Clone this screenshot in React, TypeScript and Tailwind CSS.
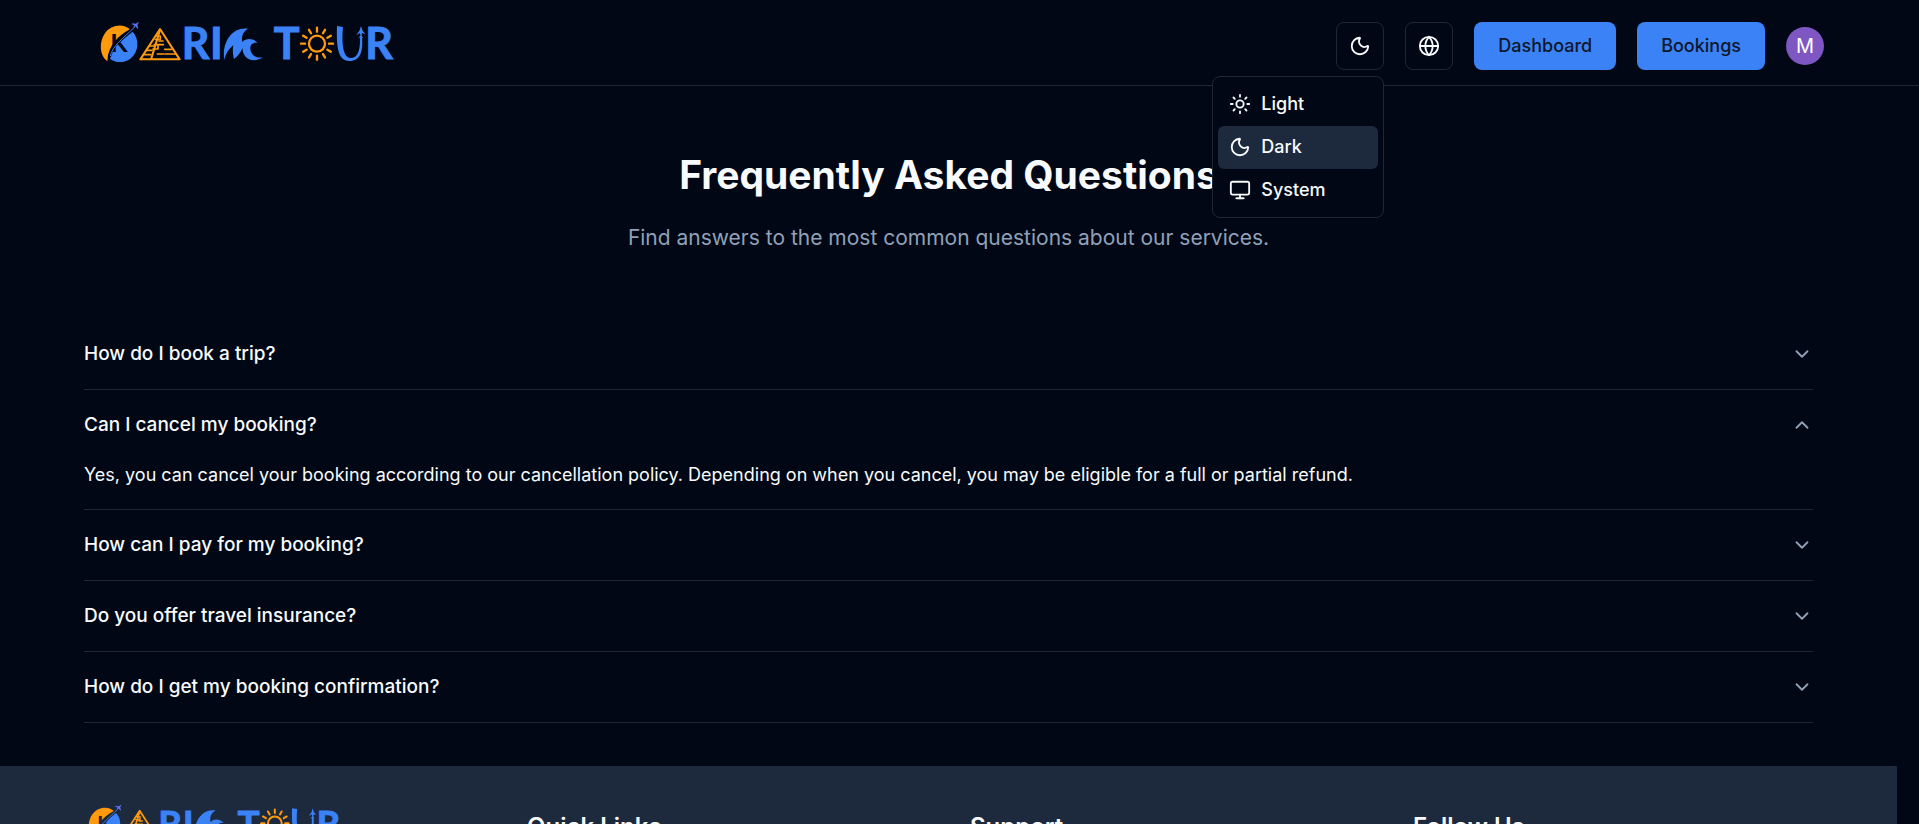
import { useState } from "react";
import { ChevronDown, Globe, Monitor, Moon, Sun } from "lucide-react";
import clsx from "clsx";

const faqs = [
  {
    question: "How do I book a trip?",
    answer: "Choose a tour, pick your dates and confirm the booking from the tour page.",
  },
  {
    question: "Can I cancel my booking?",
    answer:
      "Yes, you can cancel your booking according to our cancellation policy. Depending on when you cancel, you may be eligible for a full or partial refund.",
  },
  {
    question: "How can I pay for my booking?",
    answer: "You can pay by credit card, debit card or bank transfer.",
  },
  {
    question: "Do you offer travel insurance?",
    answer: "Yes, insurance can be added to any trip at checkout.",
  },
  {
    question: "How do I get my booking confirmation?",
    answer: "We send the confirmation to your email as soon as payment is complete.",
  },
];

const themes = [
  { name: "Light", Icon: Sun },
  { name: "Dark", Icon: Moon },
  { name: "System", Icon: Monitor },
];

const rays = [0, 30, 60, 90, 120, 150, 180, 210, 240, 270, 300, 330];

// The K and the swoosh behind the plane take the colour of the surface the logo sits on.
function Logo({ className, surface }: { className: string; surface: string }) {
  return (
    <svg viewBox="60 30 885 132" role="img" aria-label="Karim Tour" className={clsx("overflow-visible", className)}>
      <path d="M82 154C58 136 57 96 74 71C92 43 130 39 150 58C114 77 84 108 82 154Z" fill="#ff9a0c" />
      <path d="M158 65C179 88 177 126 151 146C132 160 106 159 90 146C91 114 124 91 158 65Z" fill="#3b82f6" />
      <text x="91" y="127" fontSize="76" fill={surface} className="font-[Lato] font-bold">K</text>
      <path d="M88 142C94 108 126 84 166 50" fill="none" stroke={surface} strokeWidth="9" />
      <path d="M91 138C96 110 128 86 164 51" fill="none" stroke="#3b82f6" strokeWidth="3" />
      <path d="M177 35L172 46L175 55L172 56L167 49L162 53L160 52L163 46L155 43L157 40L167 41Z" fill="#5b72f0" />
      <g fill="none" stroke="#ff9a0c" strokeWidth="6" strokeLinejoin="round" strokeLinecap="round">
        <path d="M240 57L181 148H299Z" />
        <path d="M240 60L214 145" />
        <path d="M229 78H241M226 88H237M241 88V78M223 104H250M237 93H249M219 117H234M234 117V106M254 118H275M232 132H252M256 132H286M208 108H220M199 121H216M191 134H212" strokeWidth="5" />
      </g>
      <g fill="#3b82f6" stroke="#3b82f6" strokeWidth="3" className="font-[Lato] font-bold" fontSize="129">
        <text x="305" y="148">R</text>
        <text x="390" y="148">I</text>
        <text x="581" y="148">T</text>
        <text x="856" y="148">R</text>
      </g>
      <path
        d="M433 150C424 98 457 48 504 56C489 65 483 78 487 96C500 82 522 86 533 99C514 96 507 110 513 125C519 139 532 145 549 142C533 153 508 155 495 138C489 130 487 122 488 113C481 129 472 139 462 147C459 134 457 122 460 106C445 118 437 132 433 150Z"
        fill="#3b82f6"
      />
      <g stroke="#ff9a0c" fill="none" strokeLinecap="round">
        <circle cx="711" cy="101" r="24" strokeWidth="7" />
        {rays.map((angle) => (
          <path key={angle} d="M711 65V53" strokeWidth="7" transform={`rotate(${angle} 711 101)`} />
        ))}
      </g>
      <path d="M771 48L789 51C785 92 787 143 812 144C837 144 841 112 840 80H846C850 122 842 153 808 153C773 153 769 108 771 48Z" fill="#3b82f6" />
      <path d="M843 48L847 61L856 73L846 69L845 77L850 84L843 82L835 84L841 77L840 69L829 76L839 61Z" fill="#3b82f6" />
    </svg>
  );
}

export default function App() {
  const [open, setOpen] = useState(1);
  const [theme, setTheme] = useState("Dark");

  return (
    <div className="flex h-screen flex-col overflow-hidden bg-[#010714] font-[Inter,sans-serif] text-slate-50">
      <header className="relative z-10 shrink-0 border-b border-[#1f2733]">
        <div className="mx-auto flex h-[85px] max-w-[1729px] items-center justify-between pl-[5px]">
          <a href="#home" className="pb-[2px]">
            <Logo className="w-[295px]" surface="#010714" />
          </a>
          <nav className="flex items-center gap-[21px] pt-[6px]">
            <div className="relative">
              <button
                aria-label="Theme"
                className="flex size-12 items-center justify-center rounded-lg border border-[#1f2733]"
              >
                <Moon className="size-[22px]" />
              </button>
              <div
                role="menu"
                className="absolute top-full right-0 mt-[6px] w-[172px] rounded-lg border border-[#1f2733] bg-[#010714] px-[5px] pt-[6px] pb-[5px]"
              >
                {themes.map(({ name, Icon }) => (
                  <button
                    key={name}
                    role="menuitem"
                    onClick={() => setTheme(name)}
                    className={clsx(
                      "flex h-[43px] w-full items-center gap-[10px] rounded-md px-[11px] text-lg font-medium",
                      theme === name && "bg-slate-800",
                    )}
                  >
                    <Icon className="size-[22px]" />
                    {name}
                  </button>
                ))}
              </div>
            </div>
            <button
              aria-label="Language"
              className="flex size-12 items-center justify-center rounded-lg border border-[#1f2733]"
            >
              <Globe className="size-[22px]" />
            </button>
            <a href="#dashboard" className="flex h-12 items-center rounded-lg bg-[#3b82f6] px-6 text-lg font-medium text-slate-900">
              Dashboard
            </a>
            <a href="#bookings" className="flex h-12 items-center rounded-lg bg-[#3b82f6] px-6 text-lg font-medium text-slate-900">
              Bookings
            </a>
            <button aria-label="Account" className="flex size-[38px] items-center justify-center rounded-full bg-[#7e57c2] text-xl text-white">
              M
            </button>
          </nav>
        </div>
      </header>

      <div className="mr-[22px]">
        <main className="mx-auto max-w-[1729px] pt-[62px] pb-[43px]">
          <div className="text-center">
            <h1 className="text-[39px] leading-[54px] font-bold">Frequently Asked Questions</h1>
            <p className="mt-5 text-[21px] leading-8 text-slate-400">
              Find answers to the most common questions about our services.
            </p>
          </div>
          <div className="mt-[65px]">
            {faqs.map(({ question, answer }, i) => (
              <section key={question} className="border-b border-[#1f2733]">
                <h2>
                  <button
                    aria-expanded={open === i}
                    onClick={() => setOpen(open === i ? -1 : i)}
                    className="flex h-[70px] w-full items-center justify-between text-left text-[19px] font-medium"
                  >
                    {question}
                    <ChevronDown className={clsx("size-[22px] text-slate-400", open === i && "rotate-180")} />
                  </button>
                </h2>
                {open === i && <p className="pb-5 text-lg leading-[29px]">{answer}</p>}
              </section>
            ))}
          </div>
        </main>

        <footer className="bg-slate-800 pt-[37px] pb-12">
          <div className="mx-auto grid max-w-[1729px] grid-cols-4 gap-[43px]">
            <a href="#home" className="pl-1">
              <Logo className="w-[254px]" surface="#1d293d" />
            </a>
            <h3 className="pt-2 text-2xl leading-8 font-semibold">Quick Links</h3>
            <h3 className="pt-2 text-2xl leading-8 font-semibold">Support</h3>
            <h3 className="pt-2 text-2xl leading-8 font-semibold">Follow Us</h3>
          </div>
        </footer>
      </div>
    </div>
  );
}
